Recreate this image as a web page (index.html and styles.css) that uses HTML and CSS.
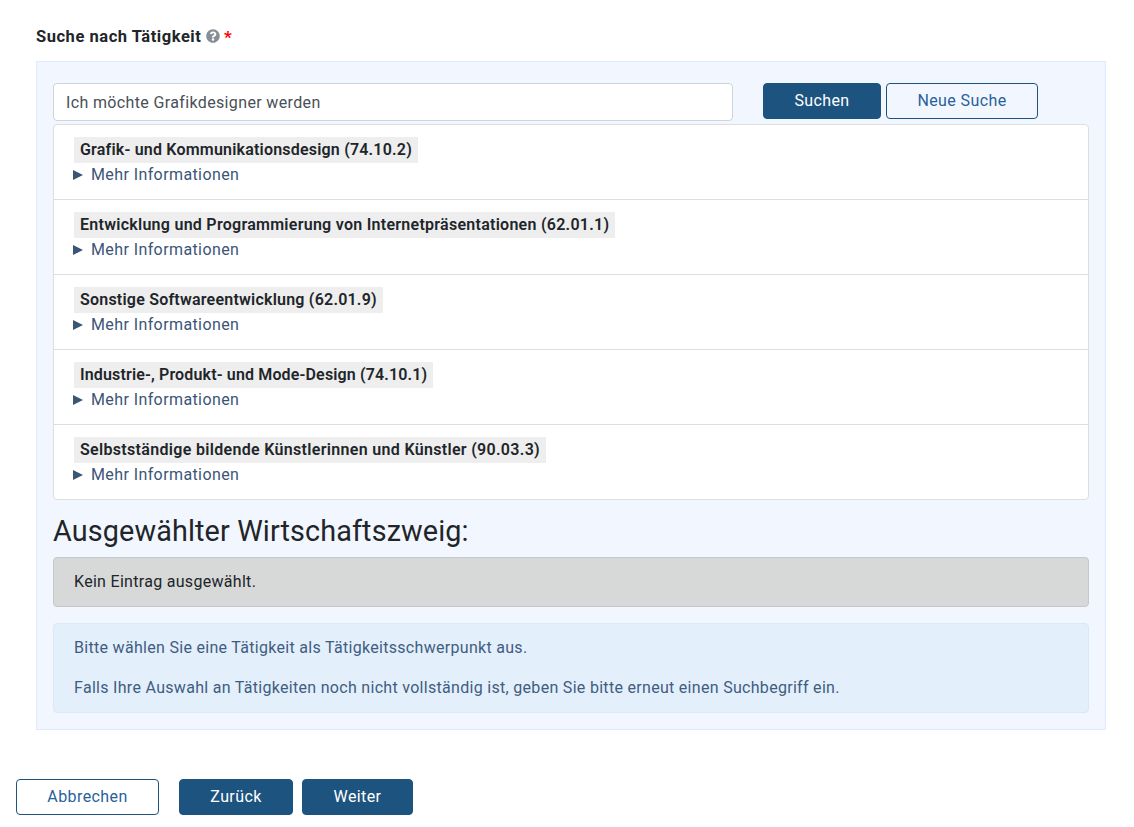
FILE: index.html
```html
<!DOCTYPE html>
<html lang="de">
<head>
<meta charset="utf-8">
<title>Suche nach Tätigkeit</title>
<link rel="stylesheet" href="styles.css">
</head>
<body>
<main class="page">
  <div class="label-row">
    <label class="field-label" for="q">Suche nach Tätigkeit</label>
    <svg class="help" viewBox="0 0 512 512" aria-hidden="true"><path fill="#868e96" d="M504 256c0 137-111 248-248 248S8 393 8 256 119 8 256 8s248 111 248 248zM262.700 90c-54.500 0-89.300 23-116.500 63.800-3.500 5.300-2.400 12.400 2.700 16.300l34.700 26.300c5.200 3.900 12.600 3 16.700-2.100 17.900-22.700 30.100-35.800 57.300-35.800 20.400 0 45.700 13.100 45.700 33 0 15-12.400 22.700-32.500 34C247.100 238.500 216 255 216 296v4c0 6.600 5.400 12 12 12h56c6.600 0 12-5.400 12-12v-1.300c0-28.500 83.200-29.600 83.200-106.700 0-58-60.200-102-116.500-102zM256 338c-25.400 0-46 20.600-46 46s20.600 46 46 46 46-20.600 46-46-20.600-46-46-46z"/></svg>
    <span class="required">*</span>
  </div>
  <section class="panel">
    <div class="search-row">
      <input class="search" id="q" type="text" value="Ich möchte Grafikdesigner werden">
      <button class="btn btn-primary btn-search">Suchen</button>
      <button class="btn btn-outline btn-new">Neue Suche</button>
    </div>
    <ul class="results">
      <li class="result"><span class="result-title t1">Grafik- und Kommunikationsdesign (74.10.2)</span><div class="more">Mehr Informationen</div></li>
      <li class="result"><span class="result-title t2">Entwicklung und Programmierung von Internetpräsentationen (62.01.1)</span><div class="more">Mehr Informationen</div></li>
      <li class="result"><span class="result-title t3">Sonstige Softwareentwicklung (62.01.9)</span><div class="more">Mehr Informationen</div></li>
      <li class="result"><span class="result-title t4">Industrie-, Produkt- und Mode-Design (74.10.1)</span><div class="more">Mehr Informationen</div></li>
      <li class="result"><span class="result-title t5">Selbstständige bildende Künstlerinnen und Künstler (90.03.3)</span><div class="more">Mehr Informationen</div></li>
    </ul>
    <h3 class="heading">Ausgewählter Wirtschaftszweig:</h3>
    <div class="alert alert-empty"><p class="empty-text">Kein Eintrag ausgewählt.</p></div>
    <div class="alert alert-info">
      <p class="info-first">Bitte wählen Sie eine Tätigkeit als Tätigkeitsschwerpunkt aus.</p>
      <p class="info-second">Falls Ihre Auswahl an Tätigkeiten noch nicht vollständig ist, geben Sie bitte erneut einen Suchbegriff ein.</p>
    </div>
  </section>
  <div class="actions">
    <button class="btn btn-outline btn-cancel">Abbrechen</button>
    <button class="btn btn-primary btn-back">Zurück</button>
    <button class="btn btn-primary btn-next">Weiter</button>
  </div>
</main>
</body>
</html>
```
FILE: styles.css
```css
* { box-sizing: border-box; }
body { margin: 0; background: #fff; color: #212529; font: 16px/24px Roboto, "Liberation Sans", sans-serif; letter-spacing: 0.3px; overflow: hidden; }
p, ul, h3 { margin: 0; padding: 0; }
.page { padding: 24px 28px 0 16px; }
.label-row { display: flex; align-items: center; height: 24px; margin-left: 20px; }
.field-label { padding-top: 1px; line-height: 25px; font-size: 16.500px; font-weight: 700; letter-spacing: 0.540px; width: 170px; white-space: nowrap; }
.help { width: 14px; height: 14px; }
.required { color: #f00; font-size: 17px; font-weight: 700; margin: 2px 0 0 4px; }
.panel { margin: 13px 0 0 20px; width: 1070px; height: 669px; padding: 21px 16px 16px; background: #f2f7ff; border: 1px solid #e0eafc; }
.search-row { display: flex; align-items: flex-start; height: 41px; }
.search { width: 680px; height: 38px; padding: 6px 12px; border: 1px solid #ced4da; border-radius: 4px; background: #fff; color: #495057; font: inherit; letter-spacing: 0.36px; outline: 0; }
.btn { height: 36px; padding: 0; border: 1px solid #1c547f; border-radius: 4px; font: inherit; letter-spacing: 0.4px; text-align: center; white-space: nowrap; }
.btn-primary { background: #1c547f; color: #fff; }
.btn-outline { background: transparent; color: #29619a; }
.btn-search { width: 118px; margin-left: 30px; }
.btn-new { width: 152px; margin-left: 5px; }
.results { list-style: none; background: #fff; border: 1px solid #dcdedf; border-radius: 4px; }
.result { height: 75px; padding: 12px 20px; border-bottom: 1px solid #dcdedf; }
.result:last-child { height: 74px; border-bottom: 0; }
.result-title { display: block; width: fit-content; height: 26px; padding: 0 6px; line-height: 25px; background: #eee; font-weight: 600; white-space: nowrap; }
.t1 { letter-spacing: 0.2px; }
.t2 { letter-spacing: 0.27px; }
.t3 { letter-spacing: 0.22px; }
.t4 { letter-spacing: 0.15px; }
.t5 { letter-spacing: 0.32px; }
.more { display: flex; align-items: center; margin-left: -1px; line-height: 24px; color: #3b5577; letter-spacing: 0.4px; }
.more::before { content: ""; margin-right: 8px; border-left: 10px solid #3b5577; border-top: 5.500px solid transparent; border-bottom: 5.500px solid transparent; }
.heading { margin: 14px 0 9px; font-size: 28.800px; line-height: 34px; font-weight: 400; letter-spacing: 0.12px; }
.alert { border: 1px solid; border-radius: 4px; padding: 12px 20px; white-space: nowrap; }
.alert-empty { height: 50px; background: #d7d9d8; border-color: #c5c8ca; }
.alert-info { height: 90px; margin-top: 16px; background: #e4effc; border-color: #d9e8fb; color: #405d80; display: grid; gap: 16px; }
.actions { display: flex; margin-top: 49px; }
.btn-cancel { width: 143px; }
.btn-back { width: 114px; margin-left: 20px; }
.btn-next { width: 111px; margin-left: 9px; }
```
